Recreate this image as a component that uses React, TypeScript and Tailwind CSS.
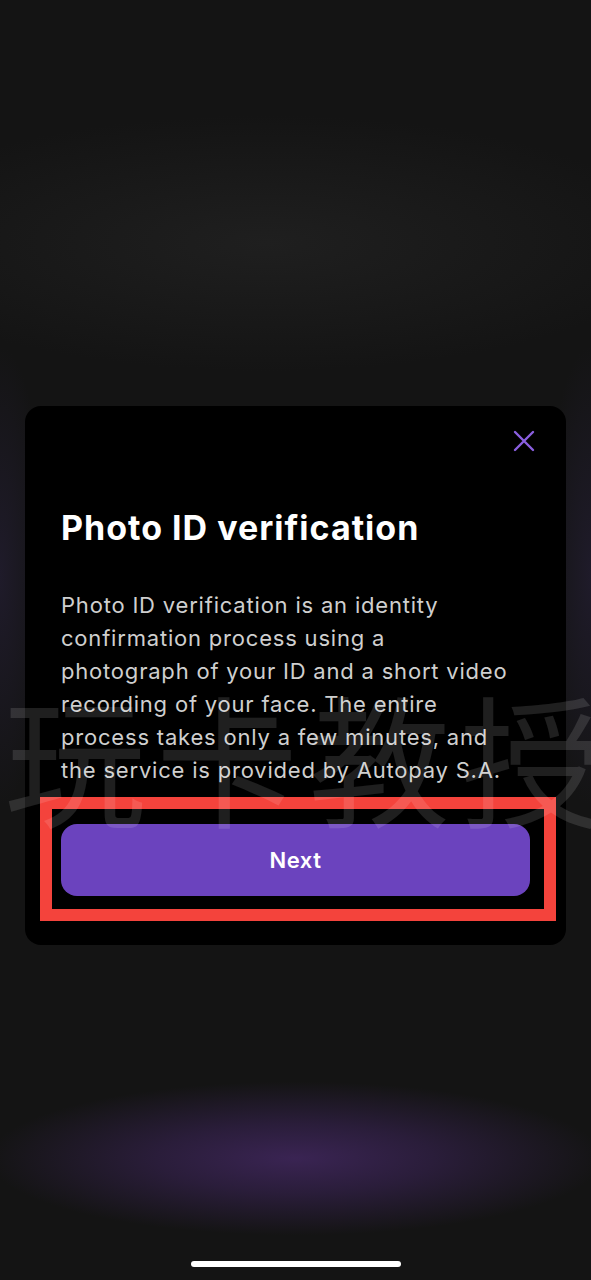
export default function App() {
  return (
    <div className="relative h-[1280px] w-full overflow-hidden bg-[#141414] font-['Inter',sans-serif]">
      {/* background glows */}
      <div className="pointer-events-none absolute inset-0 bg-[radial-gradient(ellipse_70%_10%_at_45%_19%,#1f1f1f_0%,transparent_100%)]" />
      <div className="pointer-events-none absolute inset-0 bg-[radial-gradient(ellipse_52%_6%_at_50%_90.5%,#3a2453_0%,#2a1d3a_45%,transparent_100%)]" />
      <div className="pointer-events-none absolute inset-0 bg-[radial-gradient(ellipse_8%_18%_at_0%_45%,#1f1b2a_0%,transparent_100%)]" />
      <div className="pointer-events-none absolute inset-0 bg-[radial-gradient(ellipse_8%_18%_at_100%_45%,#1f1b2a_0%,transparent_100%)]" />

      <div className="relative flex flex-col px-[25px] pt-[406px]">
        <div className="flex flex-col rounded-[16px] bg-black px-[36px] pb-[49px] pt-[24px]">
          <div className="-mr-[5px] flex justify-end">
            <svg width="22" height="22" viewBox="0 0 22 22" fill="none" stroke="#8b5fe0" strokeWidth="2.4" strokeLinecap="round">
              <path d="M2 2L20 20M20 2L2 20" />
            </svg>
          </div>
          <h1 className="mt-[56px] text-[34px] font-bold leading-[40px] tracking-[1px] text-white">
            Photo ID verification
          </h1>
          <p className="mr-[18px] mt-[41px] text-[22px] leading-[33px] tracking-[0.8px] text-[#cfcfcf]">
            Photo ID verification is an identity confirmation process using a photograph of your ID and a short video recording of your face. The entire process takes only a few minutes, and the service is provided by Autopay S.A.
          </p>
          <div className="relative mt-[37px] w-full">
            <button className="flex h-[72px] w-full items-center justify-center rounded-[16px] bg-[#6b43be] text-[22px] font-semibold tracking-[0.5px] text-white">
              Next
            </button>
            <div className="pointer-events-none absolute -bottom-[25px] -left-[21px] -right-[26px] -top-[27px] border-[12px] border-[#f4433c]" />
          </div>
        </div>
      </div>

      {/* watermark */}
      <div className="pointer-events-none absolute left-[4px] top-[684px] flex gap-[10px] font-['Noto_Sans_CJK_SC',sans-serif] text-[142px] font-normal leading-none text-white/[0.12]">
        <span>玩</span>
        <span>卡</span>
        <span>教</span>
        <span>授</span>
      </div>

      <div className="absolute bottom-[13px] left-[191px] h-[6px] w-[210px] rounded-full bg-white" />
    </div>
  );
}
